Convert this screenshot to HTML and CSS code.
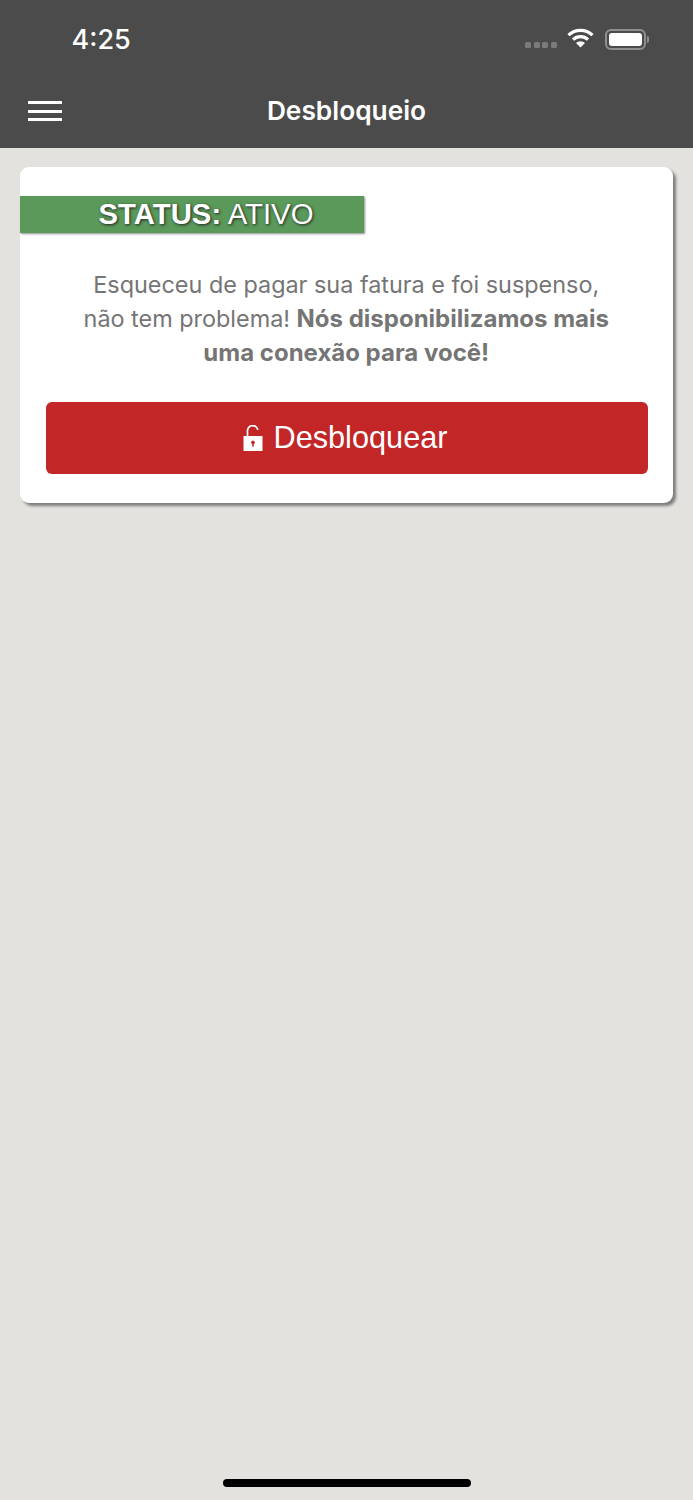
FILE: index.html
```html
<!DOCTYPE html>
<html lang="pt">
<head>
<meta charset="utf-8">
<title>Desbloqueio</title>
<link rel="stylesheet" href="styles.css">
</head>
<body>
<div class="screen">
  <header class="header">
    <div class="statusbar">
      <span class="time">4:25</span>
      <div class="indicators">
        <div class="signal"><i></i><i></i><i></i><i></i></div>
        <svg class="wifi" width="27" height="20" viewBox="0 0 27 20">
          <path d="M1.5 7.2 A17.5 17.5 0 0 1 25.5 7.2" fill="none" stroke="#fff" stroke-width="3.2"/>
          <path d="M6 11.6 A11 11 0 0 1 21 11.6" fill="none" stroke="#fff" stroke-width="3.2"/>
          <path d="M13.5 19.5 L9 15 A6.4 6.4 0 0 1 18 15 Z" fill="#fff"/>
        </svg>
        <div class="battery"><div class="battery-body"><div class="battery-fill"></div></div><div class="battery-cap"></div></div>
      </div>
    </div>
    <div class="navbar">
      <button class="menu" aria-label="Menu"><i></i><i></i><i></i></button>
      <h1 class="title">Desbloqueio</h1>
    </div>
  </header>
  <main class="content">
    <section class="card">
      <div class="status"><b>STATUS:</b> ATIVO</div>
      <p class="message">Esqueceu de pagar sua fatura e foi suspenso,<br>não tem problema! <b>Nós disponibilizamos mais<br>uma conexão para você!</b></p>
      <button class="unlock">
        <svg class="lock" width="20" height="26" viewBox="0 0 20 26">
          <path d="M4.5 12 V6.5 A5 5 0 0 1 14.8 5" fill="none" stroke="#fff" stroke-width="1.7"/>
          <path fill-rule="evenodd" fill="#fff" d="M0.5 11 H19.5 V26 H0.5 Z M10 15.4 a1.9 1.9 0 0 0 -0.8 3.6 V21.4 H10.8 V19 A1.9 1.9 0 0 0 10 15.4 Z"/>
        </svg>
        <span>Desbloquear</span>
      </button>
    </section>
  </main>
  <div class="home"></div>
</div>
</body>
</html>
```
FILE: styles.css
```css
* { box-sizing: border-box; }
html, body { margin: 0; padding: 0; }
body { font-family: "Liberation Sans", Arial, sans-serif; background: #e3e2de; }
.screen { width: 693px; height: 1500px; display: flex; flex-direction: column; background: #e3e2de; overflow: hidden; }
.header { height: 148px; background: #4b4b4b; flex: none; color: #fff; }
.statusbar { height: 74px; display: flex; justify-content: space-between; align-items: flex-start; padding: 0 44px 0 71.5px; }
.time { font-family: Inter, sans-serif; font-size: 27px; line-height: 32px; margin-top: 24px; font-weight: 500; }
.indicators { display: flex; align-items: center; margin-top: 28px; height: 22px; }
.signal { display: flex; gap: 2.5px; margin-top: 12px; margin-right: 10.5px; margin-left: -5px; }
.signal i { width: 6px; height: 5.5px; border-radius: 1.5px; background: #7b7b7b; }
.wifi { margin-right: 11px; margin-top: -3px; }
.battery { display: flex; align-items: center; }
.battery-body { width: 41px; height: 21px; border: 2px solid #8f8f8f; border-radius: 6px; padding: 2px; }
.battery-fill { width: 100%; height: 100%; background: #fff; border-radius: 3px; }
.battery-cap { width: 2px; height: 7px; margin-left: 1px; background: #8f8f8f; border-radius: 0 2px 2px 0; }
.navbar { height: 74px; display: flex; align-items: center; justify-content: center; position: relative; }
.menu { position: absolute; left: 28px; top: 27px; width: 34px; height: 20px; padding: 0; border: 0; background: none; display: flex; flex-direction: column; justify-content: space-between; }
.menu i { display: block; height: 3px; background: #fff; }
.title { margin: 0; font-family: Inter, sans-serif; font-size: 26.3px; line-height: 30px; font-weight: 600; }
.content { padding: 19px 20px 0 19.5px; flex: none; }
.card { background: #fff; width: 653.5px; height: 336px; border-radius: 9px; box-shadow: 3px 3px 3px #7d7d7d; padding-top: 29px; }
.status { width: 344px; height: 37px; background: #5a995a; box-shadow: 1px 1px 2px #8a8a8a; color: #fff; font-size: 29.3px; line-height: 35px; text-align: center; padding-left: 29px; text-shadow: 1px 1px 3px #222; }
.message { margin: 35px 0 0; color: #757575; font-family: Inter, sans-serif; font-size: 23.4px; line-height: 34px; text-align: center; }
.message b { font-size: 24px; }
.unlock { display: flex; align-items: center; justify-content: center; gap: 10px; margin: 32px 26px 0; width: 602px; height: 72px; padding: 0 8px 0 6px; background: #c22627; border: 0; border-radius: 6px; color: #fff; font-family: "Liberation Sans", Arial, sans-serif; font-size: 30.7px; }
.lock { flex: none; margin-top: -1px; }
.home { width: 248px; height: 8px; margin: auto auto 13px; background: #000; border-radius: 4px; }
```
